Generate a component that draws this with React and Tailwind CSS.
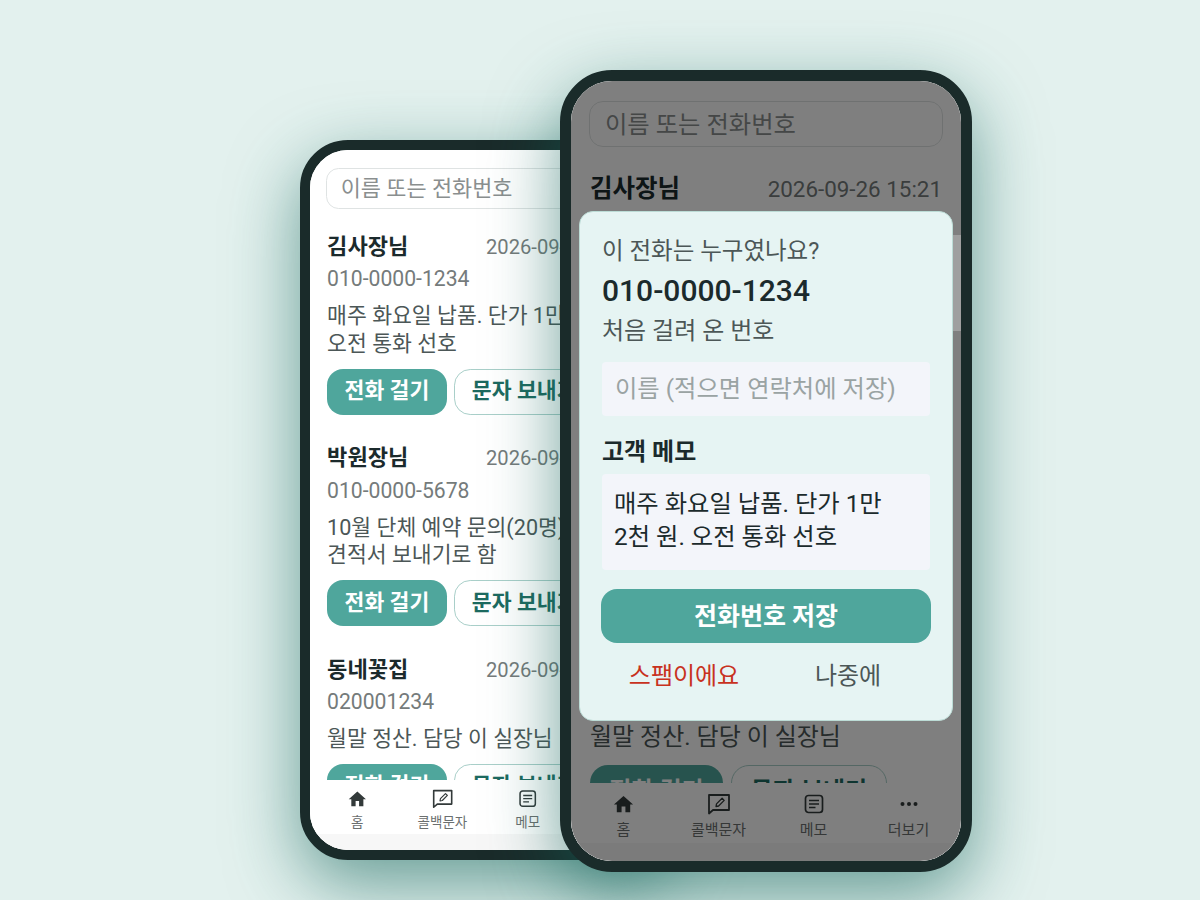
import { MdHome } from 'react-icons/md';

const people = [
  { name: '김사장님', phone: '010-0000-1234', memo: '매주 화요일 납품. 단가 1만 2천 원. 오전 통화 선호' },
  { name: '박원장님', phone: '010-0000-5678', memo: '10월 단체 예약 문의(20명).\n견적서 보내기로 함' },
  { name: '동네꽃집', phone: '020001234', memo: '월말 정산. 담당 이 실장님' },
];

function CallbackIcon({ className }) {
  return (
    <svg viewBox="0 0 26 26" fill="none" stroke="currentColor" strokeWidth="1.8" className={className}>
      <path d="M3 4h20v15H7l-4 3.5z" strokeLinejoin="round" />
      <path d="M10 15.5l.5-2.6 5.6-5.6 2.1 2.1-5.6 5.6z" strokeWidth="1.3" strokeLinejoin="round" />
    </svg>
  );
}

function MemoIcon({ className }) {
  return (
    <svg viewBox="0 0 26 26" fill="none" stroke="currentColor" strokeWidth="1.7" className={className}>
      <rect x="4.5" y="4.5" width="17" height="17" rx="3" />
      <path d="M8 9.5h10M8 13h10M8 16.5h6.5" strokeWidth="1.5" />
    </svg>
  );
}

function DotsIcon({ className }) {
  return (
    <svg viewBox="0 0 26 26" fill="currentColor" className={className}>
      <circle cx="6.5" cy="13" r="2" />
      <circle cx="13" cy="13" r="2" />
      <circle cx="19.5" cy="13" r="2" />
    </svg>
  );
}

const tabs = [
  { label: '홈', Icon: MdHome, iconClass: 'my-[1.5px] size-[23px]' },
  { label: '콜백문자', Icon: CallbackIcon, iconClass: 'size-[26px]' },
  { label: '메모', Icon: MemoIcon, iconClass: 'size-[26px]' },
  { label: '더보기', Icon: DotsIcon, iconClass: 'size-[26px]' },
];

function CallRow({ person }) {
  return (
    <div className="flex flex-col">
      <div className="flex items-center justify-between">
        <span className="text-[24.5px] leading-[32px] font-bold text-[#1b2a2c]">{person.name}</span>
        <span className="text-[22.4px] leading-[32px] text-[#757b7b]">2026-09-26 15:21</span>
      </div>
      <div className="mt-1 text-[23.5px] leading-[32px] text-[#757b7b]">{person.phone}</div>
      <div className="mt-[9px] text-[24px] leading-[31px] break-keep whitespace-pre-line text-[#4c5757]">{person.memo}</div>
      <div className="mt-3 flex gap-2">
        <button className="h-[51px] w-[133px] rounded-[18px] bg-[#4fa69c] text-[24px] font-semibold text-white">
          전화 걸기
        </button>
        <button className="h-[51px] w-[156px] rounded-[18px] border border-[#a9cfc9] bg-white text-[24px] font-semibold text-[#1d6a60]">
          문자 보내기
        </button>
      </div>
    </div>
  );
}

function Screen({ listGap }) {
  return (
    <div className="flex h-full w-full flex-col bg-white">
      <div className="min-h-0 flex-1 overflow-hidden px-[19px] pt-5">
        <div className="-mx-px flex h-[46px] items-center rounded-[14px] border border-[#dfe3e3] px-[15px] pt-[2px] text-[24.3px] text-[#8a8f8f]">
          이름 또는 전화번호
        </div>
        <div className={`mt-[26px] flex flex-col ${listGap}`}>
          {people.map((p) => <CallRow key={p.name} person={p} />)}
        </div>
      </div>
      <nav className="flex h-[60px] shrink-0 bg-white px-[5px] pt-[8px]">
        {tabs.map(({ label, Icon, iconClass }) => (
          <div key={label} className="flex flex-1 flex-col items-center">
            <Icon className={`${iconClass} text-[#333a3a]`} />
            <span className="mt-[2.5px] text-[15px] leading-[20px] text-[#6b6f6f]">{label}</span>
          </div>
        ))}
      </nav>
      <div className="h-[18px] shrink-0 bg-[#f7f7f7]" />
    </div>
  );
}

function CallDialog() {
  return (
    <div className="absolute top-[130px] left-2 flex h-[510px] w-[374px] flex-col rounded-[14px] border border-[#bcdcd6] bg-[#e6f4f3] px-[22px] pt-[22px]">
      <div className="text-[23.5px] leading-[34px] text-[#4c5757]">이 전화는 누구였나요?</div>
      <div className="mt-[2px] text-[30px] leading-[42px] font-medium text-[#1b2a2c]">010-0000-1234</div>
      <div className="mt-[2px] text-[24px] leading-[34px] text-[#4c5757]">처음 걸려 온 번호</div>
      <div className="mt-[14px] flex h-[54px] items-center rounded-sm bg-[#f3f5fa] px-[13px] text-[24.3px] text-[#9aa3a3]">
        이름 (적으면 연락처에 저장)
      </div>
      <div className="mt-[19px] text-[24px] leading-[34px] font-bold text-[#1b2a2c]">고객 메모</div>
      <div className="mt-[5px] h-[96px] rounded-sm bg-[#f3f5fa] px-[12px] py-[13px] text-[24.3px] leading-[33px] break-keep text-[#1b2a2c]">
        매주 화요일 납품. 단가 1만 2천 원. 오전 통화 선호
      </div>
      <button className="-mx-px mt-[19px] h-[54px] rounded-[16px] bg-[#4fa69c] pt-[2px] text-[25px] font-bold text-white">
        전화번호 저장
      </button>
      <div className="mt-4 flex">
        <span className="flex-1 text-center text-[24px] leading-[34px] text-[#c8321e]">스팸이에요</span>
        <span className="flex-1 text-center text-[24px] leading-[34px] text-[#4c5757]">나중에</span>
      </div>
    </div>
  );
}

export default function App() {
  return (
    <div className="relative h-[900px] w-[1200px] overflow-hidden bg-[#e3f1ee] font-['Roboto','Noto_Sans_CJK_KR',sans-serif]">
      {/* back phone */}
      <div className="absolute top-[140px] left-[300px] h-[720px] w-[370px] overflow-hidden rounded-[48px] border-[10px] border-[#1a2b2a] bg-white shadow-[0_24px_70px_rgba(20,100,90,0.6)]">
        <div className="h-[778px] w-[389px] [zoom:0.9]">
          <Screen listGap="gap-[33px]" />
        </div>
      </div>

      {/* front phone with the dialog */}
      <div className="absolute top-[70px] left-[560px] h-[802px] w-[412px] overflow-hidden rounded-[52px] border-[11px] border-[#1a2b2a] bg-white shadow-[0_24px_70px_rgba(20,100,90,0.6)]">
        <Screen listGap="gap-[34px]" />
        <div className="absolute inset-0 bg-black/50" />
        <div className="absolute top-[154px] right-0 h-[96px] w-2 bg-white/25" />
        <CallDialog />
      </div>
    </div>
  );
}
